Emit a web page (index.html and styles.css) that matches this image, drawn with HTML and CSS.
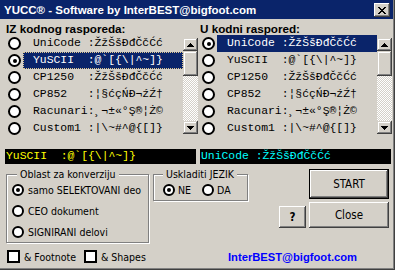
FILE: index.html
```html
<!DOCTYPE html>
<html lang="sr">
<head>
  <meta charset="UTF-8">
  <title>YUCC</title>
  <link rel="stylesheet" href="styles.css">
</head>
<body>

<div class="window">

  <!-- NASLOV -->
  <div class="titlebar">
    <span class="title">YUCC® - Software by InterBEST@bigfoot.com</span>
    <span class="close">
      <svg width="8" height="7" viewBox="0 0 8 7" shape-rendering="crispEdges"><path d="M0 0h2v1h-2z M6 0h2v1h-2z M1 1h2v1h-2z M5 1h2v1h-2z M2 2h4v1h-4z M3 3h2v1h-2z M2 4h4v1h-4z M1 5h2v1h-2z M5 5h2v1h-2z M0 6h2v1h-2z M6 6h2v1h-2z" fill="#000"/></svg>
    </span>
  </div>

  <!-- LISTE -->
  <div class="lists">
    <div class="pane">
      <div class="pane-title">IZ kodnog rasporeda:</div>
      <div class="listbox">
        <ul class="rows">
          <li class="row"><span class="radio"></span><span class="code">UniCode :ŽžŠšĐđČčĆć</span></li>
          <li class="row"><span class="radio on"></span><span class="code sel focus">YuSCII  :@`[{\|^~]}</span></li>
          <li class="row"><span class="radio"></span><span class="code">CP1250  :ŽžŠšĐđČčĆć</span></li>
          <li class="row"><span class="radio"></span><span class="code">CP852   :¦§ćçŃĐ¬źŹ†</span></li>
          <li class="row"><span class="radio"></span><span class="code">Racunari:¸¬±«°Ş®¦Ż©</span></li>
          <li class="row"><span class="radio"></span><span class="code">Custom1 :|\~#^@{[]}</span></li>
        </ul>
        <div class="scrollbar">
          <div class="sb-btn"><svg width="7" height="4" viewBox="0 0 7 4" shape-rendering="crispEdges"><path d="M3 0h1v1h1v1h1v1h1v1h-7v-1h1v-1h1v-1h1z" fill="#000"/></svg></div>
          <div class="sb-thumb"></div>
          <div class="sb-track"></div>
          <div class="sb-btn"><svg width="7" height="4" viewBox="0 0 7 4" shape-rendering="crispEdges"><path d="M0 0h7v1h-1v1h-1v1h-1v1h-1v-1h-1v-1h-1v-1h-1z" fill="#000"/></svg></div>
        </div>
      </div>
    </div>

    <div class="pane">
      <div class="pane-title">U kodni raspored:</div>
      <div class="listbox">
        <ul class="rows">
          <li class="row"><span class="radio on"></span><span class="code sel">UniCode :ŽžŠšĐđČčĆć</span></li>
          <li class="row"><span class="radio"></span><span class="code">YuSCII  :@`[{\|^~]}</span></li>
          <li class="row"><span class="radio"></span><span class="code">CP1250  :ŽžŠšĐđČčĆć</span></li>
          <li class="row"><span class="radio"></span><span class="code">CP852   :¦§ćçŃĐ¬źŹ†</span></li>
          <li class="row"><span class="radio"></span><span class="code">Racunari:¸¬±«°Ş®¦Ż©</span></li>
          <li class="row"><span class="radio"></span><span class="code">Custom1 :|\~#^@{[]}</span></li>
        </ul>
        <div class="scrollbar">
          <div class="sb-btn"><svg width="7" height="4" viewBox="0 0 7 4" shape-rendering="crispEdges"><path d="M3 0h1v1h1v1h1v1h1v1h-7v-1h1v-1h1v-1h1z" fill="#000"/></svg></div>
          <div class="sb-thumb"></div>
          <div class="sb-track"></div>
          <div class="sb-btn"><svg width="7" height="4" viewBox="0 0 7 4" shape-rendering="crispEdges"><path d="M0 0h7v1h-1v1h-1v1h-1v1h-1v-1h-1v-1h-1v-1h-1z" fill="#000"/></svg></div>
        </div>
      </div>
    </div>
  </div>

  <!-- PRIMERI -->
  <div class="previews">
    <div class="preview from">YuSCII  :@`[{\|^~]}</div>
    <div class="preview to">UniCode :ŽžŠšĐđČčĆć</div>
  </div>

  <!-- OPCIJE -->
  <div class="controls">
    <fieldset class="group area">
      <legend>Oblast za konverziju</legend>
      <div class="option"><span class="radio small on"></span>samo SELEKTOVANI deo</div>
      <div class="option"><span class="radio small"></span>CEO dokument</div>
      <div class="option"><span class="radio small"></span>SIGNIRANI delovi</div>
    </fieldset>

    <fieldset class="group lang">
      <legend>Uskladiti JEZIK</legend>
      <div class="inline">
        <div class="option"><span class="radio small on"></span>NE</div>
        <div class="option"><span class="radio small"></span>DA</div>
      </div>
    </fieldset>

    <div class="buttons">
      <div class="btn start">START</div>
      <div class="btn help">?</div>
      <div class="btn close-btn">Close</div>
    </div>
  </div>

  <!-- DNO -->
  <div class="footer">
    <span class="check"></span><span class="check-label">&amp; Footnote</span>
    <span class="check"></span><span class="check-label">&amp; Shapes</span>
    <span class="email">InterBEST@bigfoot.com</span>
  </div>

</div>

</body>
</html>
```

FILE: styles.css
```css
* {
  box-sizing: border-box;
}
body {
  margin: 0;
  background: #d4d0c8;
  font-family: "DejaVu Sans Condensed", "Open Sans", "Liberation Sans", sans-serif;
  font-size: 10.5px;
  color: #000;
}
.window {
  width: 395px;
  height: 270px;
  padding: 0 2px 2px 0;
  background: #d4d0c8;
  box-shadow: inset -1px -1px #404040, inset -2px -2px #808080;
  white-space: nowrap;
}

/* naslov */
.titlebar {
  height: 19px;
  background: #0a246a;
  color: #fff;
  display: flex;
  align-items: center;
  justify-content: space-between;
  padding: 0 3px 0 4px;
}
.title {
  font-family: "Liberation Sans", Arial, sans-serif;
  font-weight: bold;
  font-size: 11.5px;
}
.close {
  width: 16px;
  height: 14px;
  margin-top: 1px;
  background: #d4d0c8;
  box-shadow: inset -1px -1px #404040, inset 1px 1px #fff, inset -2px -2px #808080;
  display: flex;
  align-items: center;
  justify-content: center;
}

/* liste */
.lists {
  display: flex;
  gap: 2px;
  padding-left: 6px;
}
.pane {
  width: 192px;
}
.pane-title {
  font-family: "Liberation Sans", Arial, sans-serif;
  font-weight: bold;
  font-size: 11.7px;
  height: 13px;
  line-height: 13px;
  margin-top: 3px;
}
.listbox {
  display: flex;
}
.rows {
  list-style: none;
  margin: 0;
  padding: 0;
  width: 177px;
}
.row {
  display: flex;
  align-items: center;
  height: 17px;
  padding-left: 2px;
}
.radio {
  width: 13px;
  height: 13px;
  flex: none;
  border-radius: 50%;
  border: 2px solid #000;
  background: #fff;
  display: flex;
  align-items: center;
  justify-content: center;
}
.radio.small {
  width: 12px;
  height: 12px;
}
.radio.on::after {
  content: "";
  width: 4px;
  height: 4px;
  border-radius: 50%;
  background: #000;
}
.code {
  flex: 1;
  margin-left: 2px;
  height: 17px;
  line-height: 17px;
  padding-left: 10px;
  font-family: "Liberation Mono", monospace;
  font-size: 11.4px;
  white-space: pre;
}
.code.sel {
  background: #0a246a;
  color: #fff;
}
.code.focus {
  outline: 1px dotted #e0c890;
  outline-offset: -1px;
}

/* skrol */
.scrollbar {
  width: 15px;
  height: 96px;
  margin-top: 3px;
  display: flex;
  flex-direction: column;
}
.sb-btn, .sb-thumb {
  background: #d4d0c8;
  box-shadow: inset -1px -1px #404040, inset 1px 1px #d4d0c8, inset -2px -2px #808080, inset 2px 2px #fff;
}
.sb-btn {
  height: 13px;
  display: flex;
  align-items: center;
  justify-content: center;
}
.sb-thumb {
  height: 25px;
}
.sb-track {
  flex: 1;
  background: repeating-conic-gradient(#fff 0 25%, #d4d0c8 0 50%) 0 0 / 2px 2px;
}

/* primeri */
.previews {
  display: flex;
  gap: 4px;
  margin-top: 12px;
  padding-left: 5px;
}
.preview {
  width: 191px;
  height: 15px;
  line-height: 15px;
  padding-left: 1px;
  background: #000;
  font-family: "Liberation Mono", monospace;
  font-size: 11.4px;
  white-space: pre;
}
.preview.from {
  color: #ffff00;
}
.preview.to {
  color: #00ffff;
}

/* opcije */
.controls {
  display: flex;
  align-items: flex-start;
  margin-top: 4px;
  padding-left: 6px;
}
.group {
  margin: 0;
  padding: 0;
  border: 1px solid #808080;
  box-shadow: inset 1px 1px #fff, 1px 1px #fff;
  min-width: 0;
}
.group legend {
  padding: 0 3px;
  line-height: 12px;
  background: #d4d0c8;
}
.area {
  width: 143px;
  height: 75px;
  padding: 0 0 0 5px;
}
.area legend {
  margin-left: 5px;
}
.area .option {
  height: 21px;
}
.area .option:first-of-type {
  margin-top: -1px;
}
.lang {
  width: 95px;
  height: 33px;
  margin-left: 4px;
  padding-left: 9px;
}
.inline {
  display: flex;
  gap: 11px;
}
.option {
  display: flex;
  align-items: center;
  gap: 4px;
  height: 19px;
}
.lang .option {
  gap: 3px;
}

.buttons {
  display: grid;
  grid-template-columns: 27px 80px;
  grid-template-rows: 30px 26px;
  gap: 3px 3px;
  margin: 1px 4px 0 auto;
}
.btn {
  display: flex;
  align-items: center;
  justify-content: center;
  font-size: 11.5px;
  background: #d4d0c8;
  box-shadow: inset -1px -1px #404040, inset 1px 1px #fff, inset -2px -2px #808080, inset 2px 2px #d4d0c8;
}
.start {
  grid-column: 2;
  grid-row: 1;
  border: 1px solid #000;
}
.help {
  grid-column: 1;
  grid-row: 2;
  height: 22px;
  align-self: end;
  font-weight: bold;
}
.close-btn {
  grid-column: 2;
  grid-row: 2;
}

/* dno */
.footer {
  display: flex;
  align-items: center;
  height: 13px;
  margin-top: 7px;
  padding-left: 7px;
}
.check {
  width: 13px;
  height: 13px;
  border: 2px solid #000;
  background: #fff;
}
.check-label {
  margin: 0 8px 0 4px;
}
.email {
  margin: 0 36px 0 auto;
  font-family: "Liberation Sans", Arial, sans-serif;
  color: #0000ff;
  font-weight: bold;
  font-size: 11.2px;
}
```
